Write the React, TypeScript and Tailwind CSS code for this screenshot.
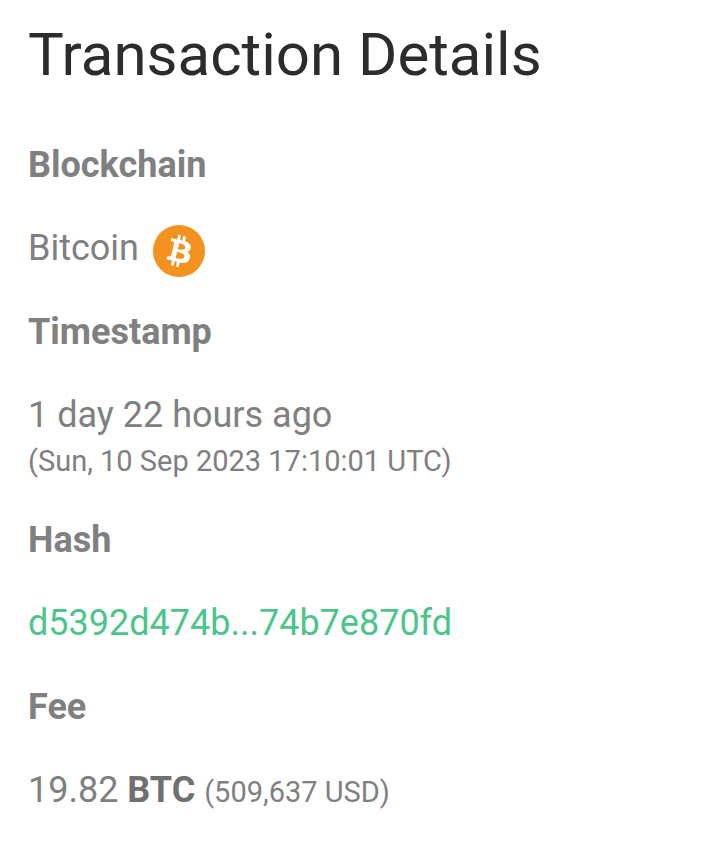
import type { ReactNode } from "react";

function BitcoinIcon() {
  return (
    <svg
      viewBox="0 0 32 32"
      className="mt-1.5 size-[52px] shrink-0"
      role="img"
      aria-label="Bitcoin logo"
    >
      <circle cx="16" cy="16" r="16" fill="#f3921e" />
      <path
        fill="#fff"
        d="M23.189 14.02c.314-2.096-1.283-3.223-3.465-3.975l.708-2.84-1.728-.43-.69 2.765c-.454-.114-.92-.22-1.385-.326l.695-2.783L15.596 6l-.708 2.839c-.376-.086-.746-.17-1.104-.26l.002-.009-2.384-.595-.46 1.846s1.283.294 1.256.312c.7.175.826.638.805 1.006l-.806 3.235c.048.012.11.03.18.057l-.183-.045-1.13 4.532c-.086.212-.303.531-.793.41.018.025-1.256-.313-1.256-.313l-.858 1.978 2.25.561c.418.105.828.215 1.231.318l-.715 2.872 1.727.43.708-2.84c.472.127.93.245 1.378.357l-.706 2.828 1.728.43.715-2.866c2.948.558 5.164.333 6.097-2.333.752-2.146-.037-3.385-1.588-4.192 1.13-.26 1.98-1.003 2.207-2.538zm-3.95 5.538c-.533 2.147-4.148.986-5.32.695l.95-3.805c1.172.293 4.929.872 4.37 3.11zm.535-5.569c-.487 1.953-3.495.96-4.47.717l.86-3.45c.975.243 4.118.696 3.61 2.733z"
      />
    </svg>
  );
}

function Detail({ label, children }: { label: string; children: ReactNode }) {
  return (
    <div>
      <dt className="mb-[35px] font-bold">{label}</dt>
      <dd>{children}</dd>
    </div>
  );
}

export default function App() {
  return (
    <main className="min-h-screen bg-white px-7 py-5 font-['Roboto',sans-serif] text-[36px] leading-[48px] text-[#808080]">
      <h1 className="mb-[51px] text-[60px] leading-[70px] text-[#2c2c2c]">
        Transaction Details
      </h1>

      <dl className="flex flex-col gap-9">
        <Detail label="Blockchain">
          <div className="flex h-12 items-center gap-3.5">
            Bitcoin
            <BitcoinIcon />
          </div>
        </Detail>

        <Detail label="Timestamp">
          1 day 22 hours ago
          <div className="pt-1 text-[29px] leading-[37px]">
            (Sun, 10 Sep 2023 17:10:01 UTC)
          </div>
        </Detail>

        <Detail label="Hash">
          <a href="#" className="text-[#4bc589]">
            d5392d474b...74b7e870fd
          </a>
        </Detail>

        <Detail label="Fee">
          19.82 <b className="text-[#707070]">BTC</b>{" "}
          <span className="text-[29px]">(509,637 USD)</span>
        </Detail>
      </dl>
    </main>
  );
}
